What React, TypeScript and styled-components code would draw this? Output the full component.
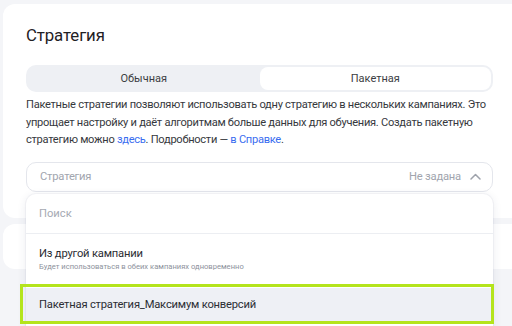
import React from "react";
import styled, { createGlobalStyle } from "styled-components";

const GlobalStyle = createGlobalStyle`
  html, body {
    margin: 0;
    padding: 0;
    background: #f4f5f8;
    font-family: Roboto, "Noto Sans", "Liberation Sans", sans-serif;
    color: #2b2d33;
  }
  #root { width: 512px; height: 326px; overflow: hidden; }
`;

const Page = styled.div`
  width: 512px;
  height: 326px;
  overflow: hidden;
  padding: 4px 0 0 3px;
  box-sizing: border-box;
  display: flex;
  flex-direction: column;
  gap: 6px;
`;

const Card = styled.section`
  width: 530px;
  flex-shrink: 0;
  background: #ffffff;
  border-radius: 12px;
  box-sizing: border-box;
  padding: 19px 0 26px 23px;
`;

const Inner = styled.div`
  width: 467px;
  display: flex;
  flex-direction: column;
`;

const Title = styled.h2`
  margin: 0;
  font-size: 16.8px;
  line-height: 24px;
  font-weight: 400;
  color: #1f2024;
  letter-spacing: -0.1px;
`;

const Segmented = styled.div`
  margin-top: 18px;
  height: 27px;
  background: #eef0f4;
  border-radius: 10px;
  display: grid;
  grid-template-columns: 1fr 1fr;
  padding: 2px;
  box-sizing: border-box;
`;

const Segment = styled.div<{ $active?: boolean }>`
  display: flex;
  align-items: center;
  justify-content: center;
  border-radius: 8px;
  font-size: 11px;
  color: #3b3d42;
  background: ${(p) => (p.$active ? "#ffffff" : "transparent")};
`;

const Para = styled.p`
  margin: 4px 0 0;
  font-size: 11.1px;
  line-height: 17.5px;
  color: #36383d;
  white-space: nowrap;
  letter-spacing: -0.28px;
`;

const Link = styled.a`
  color: #3a6df0;
  text-decoration: none;
`;

const SelectWrap = styled.div`
  position: relative;
  margin-top: 13px;
`;

const SelectField = styled.div`
  height: 30px;
  border: 1px solid #e4e6ec;
  border-radius: 10px;
  box-sizing: border-box;
  display: flex;
  align-items: center;
  padding: 0 11px 0 13px;
  font-size: 11.2px;
  letter-spacing: -0.2px;
  color: #a1a5ae;
`;

const Placeholder = styled.span`
  flex: 1;
`;

const Value = styled.span`
  margin-right: 9px;
`;

const Dropdown = styled.div`
  position: absolute;
  left: 0;
  right: 0;
  top: 32px;
  height: 160px;
  background: #ffffff;
  border-radius: 10px;
  box-shadow: 0 2px 10px rgba(40, 50, 90, 0.1), 0 0 0 1px rgba(40, 50, 90, 0.04);
  display: flex;
  flex-direction: column;
  z-index: 2;
`;

const Search = styled.div`
  height: 40px;
  display: flex;
  align-items: center;
  padding: 0 13px;
  font-size: 11.2px;
  color: #a6aab3;
  border-bottom: 1px solid #eceef2;
  box-sizing: border-box;
`;

const Option = styled.div<{ $highlight?: boolean }>`
  position: relative;
  display: flex;
  flex-direction: column;
  justify-content: center;
  padding: 0 13px;
  height: ${(p) => (p.$highlight ? "33px" : "50px")};
  margin-top: ${(p) => (p.$highlight ? "4px" : "0")};
  background: ${(p) => (p.$highlight ? "#eef0f5" : "transparent")};
`;

const OptionTitle = styled.div`
  font-size: 11.2px;
  line-height: 15px;
  color: #2b2d33;
  letter-spacing: -0.2px;
`;

const OptionSub = styled.div`
  font-size: 7.6px;
  line-height: 10px;
  color: #8d929c;
  margin-top: 1px;
`;

const Highlight = styled.div`
  position: absolute;
  left: -6px;
  right: -1px;
  top: -4px;
  bottom: -3px;
  border: 3px solid #b4e41c;
  pointer-events: none;
`;

const Chevron = () => (
  <svg width="11" height="7" viewBox="0 0 11 7" fill="none">
    <path d="M1 6L5.5 1.5L10 6" stroke="#9ea2ab" strokeWidth="1.5" strokeLinecap="round" strokeLinejoin="round" />
  </svg>
);

export default function App() {
  return (
    <>
      <GlobalStyle />
      <Page>
        <Card>
          <Inner>
            <Title>Стратегия</Title>
            <Segmented>
              <Segment>Обычная</Segment>
              <Segment $active>Пакетная</Segment>
            </Segmented>
            <Para>
              Пакетные стратегии позволяют использовать одну стратегию в нескольких кампаниях. Это
              <br />
              упрощает настройку и даёт алгоритмам больше данных для обучения. Создать пакетную
              <br />
              стратегию можно <Link>здесь</Link>. Подробности — <Link>в Справке</Link>.
            </Para>
            <SelectWrap>
              <SelectField>
                <Placeholder>Стратегия</Placeholder>
                <Value>Не задана</Value>
                <Chevron />
              </SelectField>
              <Dropdown>
                <Search>Поиск</Search>
                <Option>
                  <OptionTitle>Из другой кампании</OptionTitle>
                  <OptionSub>Будет использоваться в обеих кампаниях одновременно</OptionSub>
                </Option>
                <Option $highlight>
                  <OptionTitle>Пакетная стратегия_Максимум конверсий</OptionTitle>
                  <Highlight />
                </Option>
              </Dropdown>
            </SelectWrap>
          </Inner>
        </Card>
        <Card />
      </Page>
    </>
  );
}
